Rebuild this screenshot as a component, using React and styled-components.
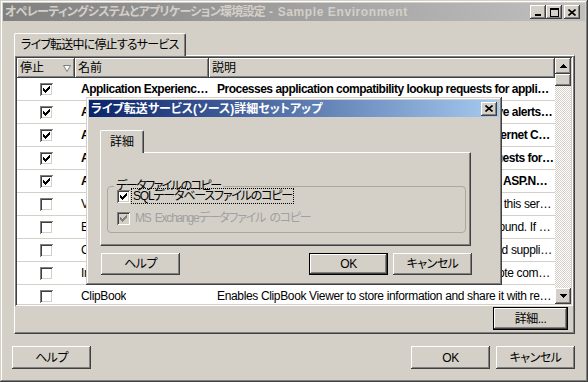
import React from "react";
import styled, { createGlobalStyle } from "styled-components";

const GlobalStyle = createGlobalStyle`
  body {
    margin: 0;
    background: #d4d0c8;
  }
  * {
    box-sizing: border-box;
  }
`;

const raised = `
  box-shadow: inset -1px -1px #404040, inset 1px 1px #ffffff,
    inset -2px -2px #808080, inset 2px 2px #d4d0c8;
`;

const sunken = `
  box-shadow: inset 1px 1px #808080, inset -1px -1px #ffffff,
    inset 2px 2px #404040, inset -2px -2px #d4d0c8;
`;

const Window = styled.div`
  position: relative;
  width: 588px;
  height: 382px;
  padding: 3px;
  background: #d4d0c8;
  box-shadow: inset -1px -1px #404040, inset 1px 1px #d4d0c8,
    inset -2px -2px #808080, inset 2px 2px #ffffff;
  font-family: "Liberation Sans", "Noto Sans CJK JP", sans-serif;
  font-size: 12px;
  font-feature-settings: "palt";
  color: #000;
  display: flex;
  flex-direction: column;
  overflow: hidden;
`;

const TitleBar = styled.div`
  height: ${(p) => p.$height}px;
  flex: none;
  display: flex;
  align-items: center;
  padding: 0 ${(p) => p.$padRight}px 0 2px;
  background: ${(p) =>
    p.$active
      ? "linear-gradient(to right, #0a246a, #a6caf0)"
      : "linear-gradient(to right, #808080, #c0c0c0)"};
`;

const TitleText = styled.div`
  flex: 1;
  font-weight: bold;
  line-height: 14px;
  white-space: nowrap;
  overflow: hidden;
  color: ${(p) => (p.$active ? "#ffffff" : "#d4d0c8")};
`;

const Squeeze = styled.span`
  letter-spacing: ${(p) => p.$ls}px;
`;

const CaptionButton = styled.div`
  width: 16px;
  height: 14px;
  flex: none;
  margin-left: ${(p) => p.$gap || 0}px;
  background: #d4d0c8;
  display: flex;
  align-items: center;
  justify-content: center;
  ${raised}
`;

const Content = styled.div`
  flex: 1;
  display: flex;
  flex-direction: column;
  padding: 12px 10px 0 9px;
`;

const TabArea = styled.div`
  margin-left: ${(p) => p.$indent || 0}px;
  width: ${(p) => p.$width}px;
  display: flex;
  flex-direction: column;
`;

const TabStrip = styled.div`
  display: flex;
  position: relative;
  z-index: 1;
  margin-bottom: -1px;
`;

const Tab = styled.div`
  height: ${(p) => p.$height}px;
  padding: 0 ${(p) => p.$pad}px;
  display: flex;
  align-items: center;
  background: #d4d0c8;
  border-top: 1px solid #ffffff;
  border-left: 1px solid #ffffff;
  border-right: 1px solid #404040;
  border-top-left-radius: 2px;
  border-top-right-radius: 2px;
  box-shadow: inset -1px 0 #808080;
  line-height: 14px;
  white-space: nowrap;
`;

const TabPanel = styled.div`
  height: ${(p) => (p.$height ? `${p.$height}px` : "auto")};
  padding: ${(p) => p.$pad};
  display: flex;
  flex-direction: column;
  background: #d4d0c8;
  border-top: 1px solid #ffffff;
  border-left: 1px solid #ffffff;
  border-right: 1px solid #404040;
  border-bottom: 1px solid #404040;
  box-shadow: inset -1px -1px #808080;
`;

const ListBox = styled.div`
  height: 250px;
  padding: 2px;
  display: flex;
  background: #ffffff;
  ${sunken}
`;

const Table = styled.div`
  flex: 1;
  overflow: hidden;
  display: flex;
  flex-direction: column;
`;

const Grid = styled.div`
  display: grid;
  grid-template-columns: 58px 134px 1fr;
  flex: none;
  height: ${(p) => p.$height}px;
  border-bottom: ${(p) => (p.$line ? "1px solid #d4d0c8" : "none")};
  font-weight: ${(p) => (p.$bold ? "bold" : "normal")};
  letter-spacing: ${(p) => (p.$line ? (p.$bold ? "-0.5px" : "-0.35px") : "0")};
`;

const HeadCell = styled.div`
  display: flex;
  align-items: center;
  padding: 0 4px 0 3px;
  background: #d4d0c8;
  line-height: 14px;
  ${raised}
`;

const Cell = styled.div`
  display: flex;
  align-items: center;
  justify-content: ${(p) => (p.$center ? "center" : "flex-start")};
  padding-left: ${(p) => p.$pad || 0}px;
  min-width: 0;
  line-height: 14px;
`;

const Clip = styled.span`
  white-space: nowrap;
  overflow: hidden;
  text-overflow: ellipsis;
`;

const HeadLabel = styled.span`
  flex: 1;
`;

const ScrollBar = styled.div`
  width: 16px;
  flex: none;
  display: flex;
  flex-direction: column;
  background: repeating-conic-gradient(#d4d0c8 0 25%, #ffffff 0 50%) 0 0 / 2px 2px;
`;

const ScrollButton = styled.div`
  width: 16px;
  height: ${(p) => p.$height || 16}px;
  flex: none;
  display: flex;
  align-items: center;
  justify-content: center;
  background: #d4d0c8;
  ${raised}
`;

const ScrollTrack = styled.div`
  flex: 1;
`;

const Box = styled.span`
  width: 13px;
  height: 13px;
  flex: none;
  display: flex;
  align-items: center;
  justify-content: center;
  background: ${(p) => (p.$disabled ? "#d4d0c8" : "#ffffff")};
  ${sunken}
`;

const ButtonRow = styled.div`
  display: flex;
  align-items: center;
  gap: ${(p) => p.$gap || 0}px;
  margin-top: ${(p) => p.$top || 0}px;
  padding: ${(p) => p.$pad || "0"};
  width: ${(p) => (p.$width ? `${p.$width}px` : "auto")};
`;

const Spacer = styled.div`
  flex: 1;
`;

const Button = styled.div`
  width: ${(p) => p.$width || 79}px;
  height: ${(p) => p.$height || 22}px;
  flex: none;
  display: flex;
  align-items: center;
  justify-content: center;
  background: #d4d0c8;
  line-height: 14px;
  letter-spacing: -0.5px;
  border: ${(p) => (p.$default ? "1px solid #000000" : "none")};
  ${raised}
`;

const Dialog = styled.div`
  position: absolute;
  left: 86px;
  top: 97px;
  width: 416px;
  height: 188px;
  padding: 3px;
  display: flex;
  flex-direction: column;
  background: #d4d0c8;
  box-shadow: inset -1px -1px #404040, inset 1px 1px #d4d0c8,
    inset -2px -2px #808080, inset 2px 2px #ffffff;
`;

const DialogBody = styled.div`
  padding: 13px 0 0 8px;
  display: flex;
  flex-direction: column;
`;

const GroupBox = styled.div`
  height: 47px;
  border: 1px solid #aca899;
  border-radius: 4px;
  padding: 0 0 0 9px;
  display: flex;
  flex-direction: column;
`;

const GroupLabel = styled.div`
  align-self: flex-start;
  margin: -8px 0 -5px -3px;
  padding: 0 2px;
  line-height: 14px;
  letter-spacing: -1.5px;
  background: #d4d0c8;
`;

const CheckRow = styled.div`
  height: 16px;
  margin-top: ${(p) => p.$top || 0}px;
  display: flex;
  align-items: center;
  gap: 2px;
  color: ${(p) => (p.$disabled ? "#a0a0a0" : "#000000")};
`;

const CheckLabel = styled.span`
  line-height: 14px;
  padding: 0 1px;
  margin-left: ${(p) => p.$shift || 0}px;
  letter-spacing: -1.2px;
  word-spacing: 2px;
  outline: ${(p) => (p.$focus ? "1px dotted #000000" : "none")};
`;

const Check = ({ color = "#000" }) => (
  <svg width="7" height="7" viewBox="0 0 7 7" shapeRendering="crispEdges">
    <path
      fill={color}
      d="M6 0h1v3h-1v1h-1v1h-1v1h-1v1h-1v-1h-1v-1h-1v-3h1v1h1v1h1v-1h1v-1h1v-1h1z"
    />
  </svg>
);

const CheckBox = ({ checked, disabled }) => (
  <Box $disabled={disabled}>
    {checked && <Check color={disabled ? "#808080" : "#000"} />}
  </Box>
);

const CloseGlyph = () => (
  <svg width="8" height="7" viewBox="0 0 8 7">
    <path d="M0.5 0.5L7.5 6.5M7.5 0.5L0.5 6.5" stroke="#000" strokeWidth="1.6" />
  </svg>
);

const MinGlyph = () => (
  <svg width="8" height="8" viewBox="0 0 8 8" shapeRendering="crispEdges">
    <rect x="1" y="6" width="6" height="2" fill="#000" />
  </svg>
);

const MaxGlyph = () => (
  <svg width="9" height="9" viewBox="0 0 9 9" shapeRendering="crispEdges">
    <path d="M0 0h9v9h-9z M1 2v6h7v-6z" fill="#000" fillRule="evenodd" />
  </svg>
);

const Arrow = ({ down }) => (
  <svg width="7" height="4" viewBox="0 0 7 4" shapeRendering="crispEdges">
    <path fill="#000" d={down ? "M0 0h7l-3.5 4z" : "M3.5 0l3.5 4h-7z"} />
  </svg>
);

const FilterIcon = () => (
  <svg width="8" height="7" viewBox="0 0 8 7">
    <path d="M0.5 0.5h7l-3.5 6z" fill="#ffffff" stroke="#808080" strokeWidth="1" />
  </svg>
);

const services = [
  {
    name: "Application Experience Lookup Service",
    desc: "Processes application compatibility lookup requests for applications as they are launched.",
    on: true,
  },
  {
    name: "Alerter",
    desc: "Notifies selected users and computers of administrative alerts. If the service is stopped.",
    on: true,
  },
  {
    name: "Application Layer Gateway Service",
    desc: "Provides support for 3rd party protocol plug-ins for Internet Connection Sharing.",
    on: true,
  },
  {
    name: "Application Management",
    desc: "Processes installation, removal, and enumeration requests for programs.",
    on: true,
  },
  {
    name: "ASP.NET State Service",
    desc: "Provides support for out-of-process session states for ASP.NET applications.",
    on: true,
  },
  {
    name: "Volume Shadow Copy",
    desc: "Manages and implements the Volume Shadow Copies. If this service is stopped.",
    on: false,
  },
  {
    name: "Background Intelligent Transfer Service",
    desc: "Transfers data between clients and servers in the background. If BITS is disabled.",
    on: false,
  },
  {
    name: "Computer Browser",
    desc: "Maintains an updated list of computers on the network and supplies this list.",
    on: false,
  },
  {
    name: "Indexing Service",
    desc: "Indexes contents and properties of files on local and remote computers.",
    on: false,
  },
  {
    name: "ClipBook",
    desc: "Enables ClipBook Viewer to store information and share it with remote computers.",
    on: false,
  },
];

export default function App() {
  return (
    <>
      <GlobalStyle />
      <Window>
        <TitleBar $height={18} $padRight={5}>
          <TitleText>
            <Squeeze $ls={-0.7}>オペレーティングシステムとアプリケーション環境設定</Squeeze>
            <Squeeze $ls={0.6}> - Sample Environment</Squeeze>
          </TitleText>
          <CaptionButton>
            <MinGlyph />
          </CaptionButton>
          <CaptionButton>
            <MaxGlyph />
          </CaptionButton>
          <CaptionButton $gap={2}>
            <CloseGlyph />
          </CaptionButton>
        </TitleBar>

        <Content>
          <TabArea $indent={2} $width={561}>
            <TabStrip>
              <Tab $height={23} $pad={6}>
                <Squeeze $ls={-0.8}>ライブ転送中に停止するサービス</Squeeze>
              </Tab>
            </TabStrip>
            <TabPanel $height={279} $pad="0 1px 0 0">
              <ListBox>
                <Table>
                  <Grid $height={20}>
                    <HeadCell>
                      <HeadLabel>停止</HeadLabel>
                      <FilterIcon />
                    </HeadCell>
                    <HeadCell>名前</HeadCell>
                    <HeadCell>説明</HeadCell>
                  </Grid>
                  {services.map((s) => (
                    <Grid key={s.name} $height={23} $line $bold={s.on}>
                      <Cell $center>
                        <CheckBox checked={s.on} />
                      </Cell>
                      <Cell $pad={6}>
                        <Clip>{s.name}</Clip>
                      </Cell>
                      <Cell $pad={8}>
                        <Clip>{s.desc}</Clip>
                      </Cell>
                    </Grid>
                  ))}
                </Table>
                <ScrollBar>
                  <ScrollButton>
                    <Arrow />
                  </ScrollButton>
                  <ScrollButton $height={12} />
                  <ScrollTrack />
                  <ScrollButton>
                    <Arrow down />
                  </ScrollButton>
                </ScrollBar>
              </ListBox>
              <ButtonRow $top={1} $pad="0 5px 0 0">
                <Spacer />
                <Button $width={75} $height={23} $default>
                  詳細...
                </Button>
              </ButtonRow>
            </TabPanel>
          </TabArea>

          <ButtonRow $top={12} $gap={6}>
            <Button $height={23}>ヘルプ</Button>
            <Spacer />
            <Button $height={23}>OK</Button>
            <Button $height={23}>キャンセル</Button>
          </ButtonRow>
        </Content>

        <Dialog>
          <TitleBar $height={17} $padRight={2} $active>
            <TitleText $active>ライブ転送サービス(ソース)詳細セットアップ</TitleText>
            <CaptionButton>
              <CloseGlyph />
            </CaptionButton>
          </TitleBar>
          <DialogBody>
            <TabArea $indent={3} $width={371}>
              <TabStrip>
                <Tab $height={23} $pad={9}>
                  詳細
                </Tab>
              </TabStrip>
              <TabPanel $pad="33px 4px 12px 6px">
                <GroupBox>
                  <GroupLabel>データファイルのコピー</GroupLabel>
                  <CheckRow>
                    <CheckBox checked />
                    <CheckLabel $focus>SQLデータベースファイルのコピー</CheckLabel>
                  </CheckRow>
                  <CheckRow $top={6} $disabled>
                    <CheckBox checked disabled />
                    <CheckLabel $shift={2}>MS Exchangeデータファイル のコピー</CheckLabel>
                  </CheckRow>
                </GroupBox>
              </TabPanel>
            </TabArea>
            <ButtonRow $top={7} $gap={5} $pad="0 0 0 4px" $width={375}>
              <Button>ヘルプ</Button>
              <Spacer />
              <Button $default>OK</Button>
              <Button>キャンセル</Button>
            </ButtonRow>
          </DialogBody>
        </Dialog>
      </Window>
    </>
  );
}
